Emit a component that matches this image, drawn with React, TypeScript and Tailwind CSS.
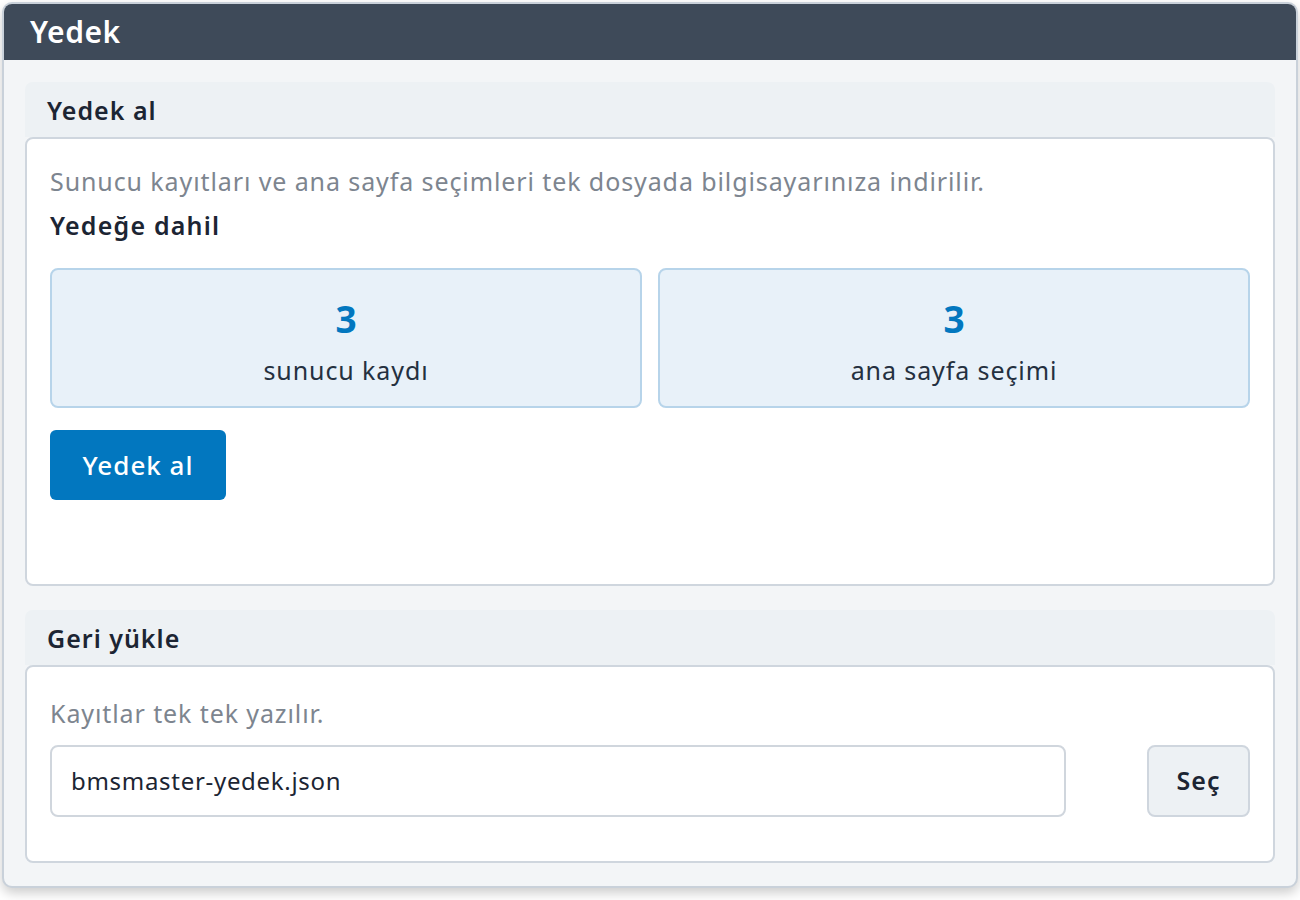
const font = { fontFamily: '"Noto Sans", "Open Sans", sans-serif' };

function SectionHeader({ title }: { title: string }) {
  return (
    <div className="flex h-[55px] items-center rounded-t-lg bg-[#edf1f4] px-[22px]">
      <h2 className="text-[25px] font-semibold leading-[32px] tracking-[1px] text-[#1c2533]">{title}</h2>
    </div>
  );
}

function StatBox({ value, label }: { value: number; label: string }) {
  return (
    <div className="flex h-[140px] flex-col items-center justify-center rounded-lg border-2 border-[#b7d4ea] bg-[#e8f1f9] pt-[6px]">
      <p className="text-[37px] font-bold leading-[44px] text-[#0277bf]">{value}</p>
      <p className="mt-[13px] text-[25px] leading-[32px] tracking-[0.9px] text-[#243040]">{label}</p>
    </div>
  );
}

export default function App() {
  return (
    <div className="min-h-[900px] bg-white p-[2px]" style={font}>
      <div className="h-[886px] w-[1296px] overflow-hidden rounded-[10px] border-2 border-[#c9d1da] bg-[#f3f5f7] shadow-[0_5px_12px_rgba(0,0,0,0.2)]">
        <div className="flex h-[56px] items-center bg-[#3e4a59] px-[26px]">
          <h1 className="text-[30px] font-semibold leading-[36px] tracking-[0.5px] text-white">Yedek</h1>
        </div>

        <div className="px-[21px] pt-[22px]">
          <section>
            <SectionHeader title="Yedek al" />
            <div className="h-[449px] rounded-lg border-2 border-[#cfd6de] bg-white px-[23px] pt-[26px]">
              <p className="text-[25px] leading-[32px] tracking-[0.9px] text-[#7d858f]">
                Sunucu kayıtları ve ana sayfa seçimleri tek dosyada bilgisayarınıza indirilir.
              </p>
              <p className="mt-[12px] text-[25px] font-semibold leading-[32px] tracking-[1.2px] text-[#1c2533]">
                Yedeğe dahil
              </p>
              <div className="mt-[27px] grid grid-cols-2 gap-[16px]">
                <StatBox value={3} label="sunucu kaydı" />
                <StatBox value={3} label="ana sayfa seçimi" />
              </div>
              <button className="mt-[22px] h-[70px] w-[176px] rounded-md bg-[#0277bf] text-[26px] font-medium tracking-[1px] text-white">
                Yedek al
              </button>
            </div>
          </section>

          <section className="mt-[24px]">
            <SectionHeader title="Geri yükle" />
            <div className="h-[198px] rounded-lg border-2 border-[#cfd6de] bg-white px-[23px] pt-[30px]">
              <p className="text-[25px] leading-[32px] tracking-[0.9px] text-[#7d858f]">Kayıtlar tek tek yazılır.</p>
              <div className="mt-[16px] flex items-center">
                <div className="flex h-[72px] w-[1016px] items-center rounded-lg border-2 border-[#d0d6dd] px-[19px] text-[24px] tracking-[0.7px] text-[#1c2533]">
                  bmsmaster-yedek.json
                </div>
                <button className="ml-auto h-[72px] w-[103px] rounded-lg border-2 border-[#cfd6de] bg-[#edf1f4] text-[25px] font-semibold tracking-[1px] text-[#1c2533]">
                  Seç
                </button>
              </div>
            </div>
          </section>
        </div>
      </div>
    </div>
  );
}
